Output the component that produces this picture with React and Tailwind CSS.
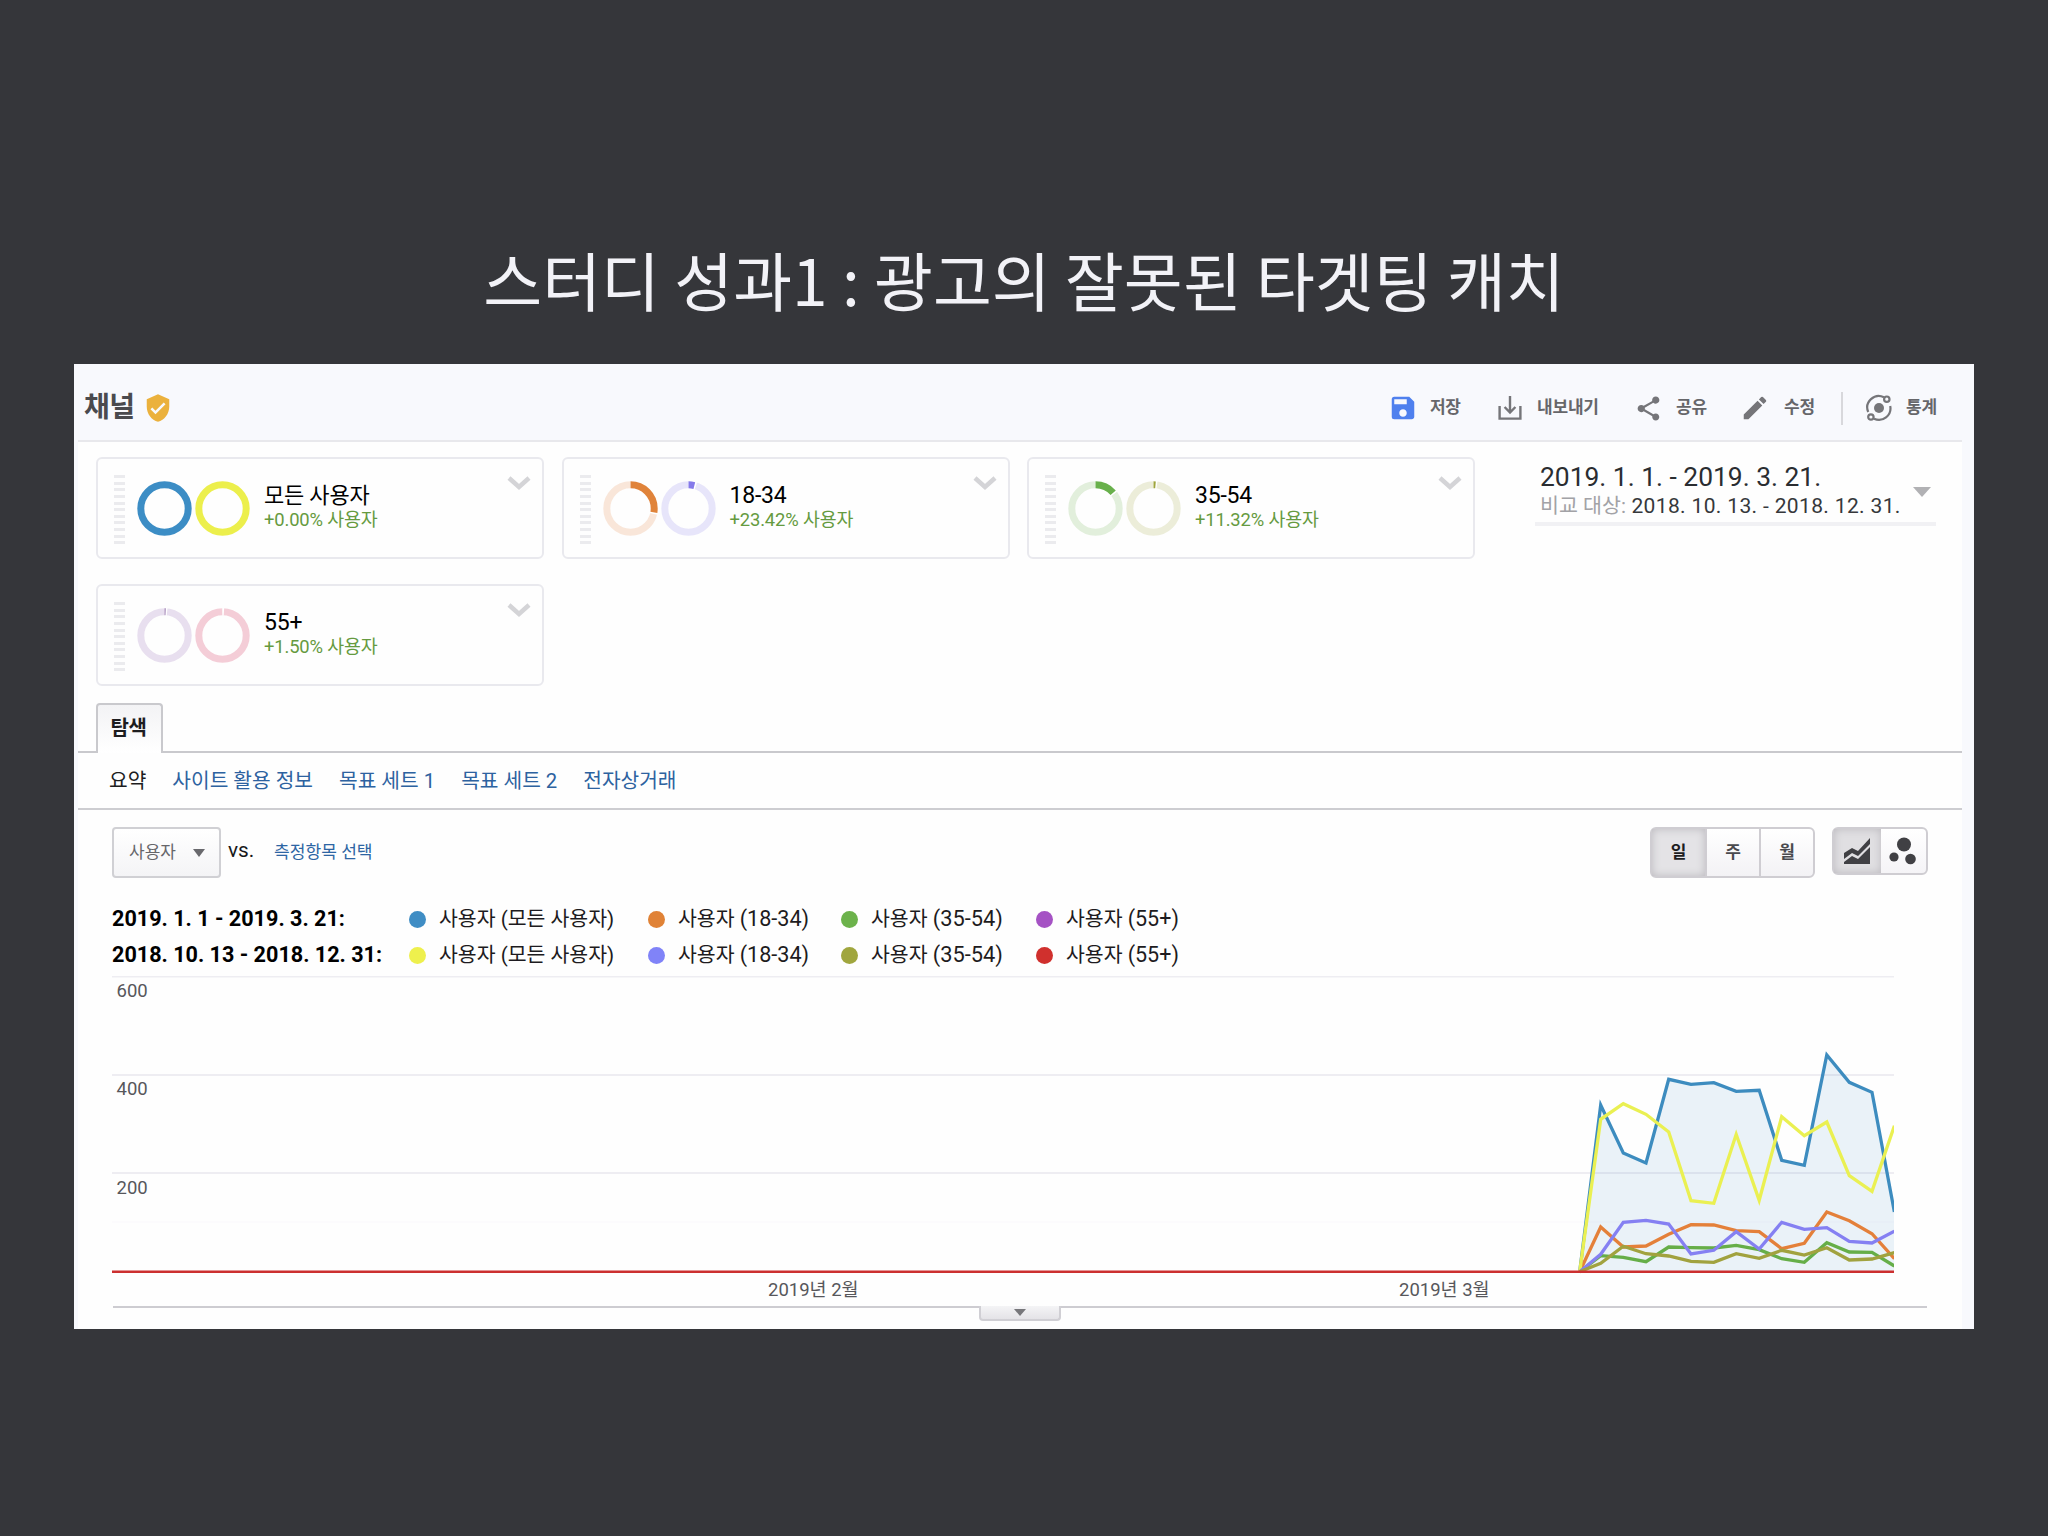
import { MdEdit, MdSave, MdShare, MdVerifiedUser } from 'react-icons/md'

const segments = [
  { name: '모든 사용자', nameStyle: 'text-[22px]', change: '+0.00%', rings: [{ color: '#3c8dc5', track: '#3c8dc5', share: 1 }, { color: '#ecef4c', track: '#ecef4c', share: 1 }] },
  { name: '18-34', nameStyle: 'text-[23px]', change: '+23.42%', rings: [{ color: '#e0833a', track: '#f9e6d9', share: 0.275 }, { color: '#8479ea', track: '#e7e5fa', share: 0.04 }] },
  { name: '35-54', nameStyle: 'text-[23px]', change: '+11.32%', rings: [{ color: '#68b04b', track: '#e2efdc', share: 0.133 }, { color: '#9fa53c', track: '#ecedd9', share: 0.014 }] },
  { name: '55+', nameStyle: 'text-[23px]', change: '+1.50%', rings: [{ color: '#a083b5', track: '#e8dfef', share: 0.008 }, { color: '#f4cdd7', track: '#f4cdd7', share: 0 }] },
]

const legend = [
  { range: '2019. 1. 1 - 2019. 3. 21:', colors: ['bg-[#3f8dc4]', 'bg-[#e08236]', 'bg-[#6cb24b]', 'bg-[#a552c4]'] },
  { range: '2018. 10. 13 - 2018. 12. 31:', colors: ['bg-[#eef04d]', 'bg-[#8083f8]', 'bg-[#a0a63e]', 'bg-[#d0302d]'] },
]
const legendItems = [
  { group: '(모든 사용자)', width: 'w-[239px]', size: 'text-[20.5px]' },
  { group: '(18-34)', width: 'w-[193px]', size: 'text-[21.6px]' },
  { group: '(35-54)', width: 'w-[195px]', size: 'text-[21.8px]' },
  { group: '(55+)', width: 'w-[150px]', size: 'text-[21.5px]' },
]

const subNav = ['사이트 활용 정보', '목표 세트 1', '목표 세트 2', '전자상거래']

const xs = [1467.7, 1488.7, 1511.3, 1534, 1556.7, 1579, 1601.8, 1624.2, 1647.2, 1669.7, 1692.3, 1714.8, 1737.3, 1760, 1782.4]
const series = [
  { color: '#3d8cbf', ys: [295.7, 129, 177, 187, 103.3, 108.3, 106.7, 115.3, 114.3, 184.3, 189.3, 79, 106.3, 116.3, 236] },
  { color: '#e4803a', ys: [295.7, 251, 271, 270, 258.3, 248.7, 249, 254.7, 255.7, 272.7, 267.3, 236, 244.7, 257.7, 282.7] },
  { color: '#66ae48', ys: [295.7, 279.7, 281.3, 285.7, 271, 271.7, 272, 269.3, 273.7, 282.7, 286.3, 266.7, 276, 276.3, 290] },
  { color: '#eaf052', ys: [295.7, 143.3, 127.7, 138.3, 156, 224.7, 227.3, 158.3, 224.3, 140.7, 159.7, 146, 199.7, 215.3, 149.7] },
  { color: '#8580f2', ys: [295.7, 278.3, 246.3, 244.3, 248, 278, 274.3, 255.7, 273, 246.3, 253.3, 251.7, 265.3, 267, 255.3] },
  { color: '#a1a23f', ys: [295.7, 287.3, 270.3, 277.7, 280, 285.3, 286.3, 277.7, 282.3, 274.3, 279, 271.7, 284, 283, 276.7] },
]

const toPoints = (ys) => ys.map((y, i) => `${xs[i]},${y}`).join(' ')

function Ring({ color, track, share }) {
  const r = 23.7
  const length = 2 * Math.PI * r
  return (
    <svg className="w-[55px] h-[55px]" viewBox="0 0 55 55" fill="none">
      <circle cx="27.5" cy="27.5" r={r} stroke={track} strokeWidth="7" />
      {share < 1 && (
        <g transform="rotate(-90 27.5 27.5)">
          <circle cx="27.5" cy="27.5" r={r} stroke="#fff" strokeWidth="8" strokeDasharray={`${length * share + 3} ${length}`} strokeDashoffset="1.5" />
          <circle cx="27.5" cy="27.5" r={r} stroke="#fff" strokeWidth="8" strokeDasharray={`1.5 ${length}`} strokeDashoffset={1.5 - length} />
          {share > 0 && <circle cx="27.5" cy="27.5" r={r} stroke={color} strokeWidth="7" strokeDasharray={`${length * share} ${length}`} />}
        </g>
      )}
    </svg>
  )
}

function SegmentCard({ name, nameStyle, change, rings }) {
  return (
    <div className="h-[102px] w-[448px] flex items-start rounded-md border-2 border-[#e9e9ee] pl-4 pr-[11px]">
      <div className="mt-4 flex flex-col gap-[3.65px]">
        {Array.from({ length: 11 }, (_, i) => (
          <div key={i} className="h-[3px] w-[11px] bg-[#ebebee]" />
        ))}
      </div>
      <div className="ml-3 mt-[22px] flex gap-[3px]">
        {rings.map((ring, i) => (
          <Ring key={i} {...ring} />
        ))}
      </div>
      <div className="ml-[14px] mt-[22px] flex-1">
        <div className={`h-[28px] leading-[29px] tracking-[-0.2px] text-black ${nameStyle}`}>{name}</div>
        <div className="h-[22px] text-[18.4px] leading-[22px] tracking-[-0.15px] text-[#659a40]">{change} 사용자</div>
      </div>
      <svg className="mt-[15px] h-[18px] w-[24px]" viewBox="0 0 24 18" fill="none" stroke="#d4d4d7" strokeWidth="4.5">
        <path d="M2 4L12 13L22 4" />
      </svg>
    </div>
  )
}

function ExportIcon() {
  return (
    <svg className="h-7 w-6" viewBox="0 0 24 28" fill="none" stroke="#757579" strokeWidth="2.4">
      <path d="M1.6 12V24.6H22.4V12M12 2V18M6.6 13L12 18.6L17.4 13" />
    </svg>
  )
}

function InsightsIcon() {
  return (
    <svg className="h-[30px] w-[26px]" viewBox="0 0 26 28" fill="none" stroke="#757579" strokeWidth="2.2">
      <circle cx="13" cy="14" r="5" fill="#757579" stroke="none" />
      <path d="M18 3.3A11.5 11.5 0 0 0 2.2 18M8 24.7A11.5 11.5 0 0 0 24.2 12" />
      <circle cx="20.8" cy="5.2" r="2.7" />
      <circle cx="4.9" cy="23" r="2.7" />
    </svg>
  )
}

function Toolbar() {
  return (
    <div className="flex h-[34px] items-center text-[17px] font-bold text-[#66666a]">
      <MdSave className="size-[30px] text-[#4f80ee]" />
      <span className="ml-[12px] w-[68px] tracking-[-0.4px]">저장</span>
      <ExportIcon />
      <span className="ml-[15px] w-[97px] tracking-[-0.2px]">내보내기</span>
      <MdShare className="size-[29px] text-[#757579]" />
      <span className="ml-[13px] w-[64px] tracking-[-0.2px]">공유</span>
      <MdEdit className="size-[30px] text-[#757579]" />
      <span className="ml-[14px] w-[57px] tracking-[-0.2px]">수정</span>
      <div className="h-[33px] w-[2px] bg-[#d8d8dc]" />
      <div className="ml-[23px]"><InsightsIcon /></div>
      <span className="ml-[14px] w-[33px] whitespace-nowrap tracking-[-0.2px]">통계</span>
    </div>
  )
}

function DateRange() {
  return (
    <div className="mt-[3px] flex h-[66px] w-[401px] items-start border-b-4 border-[#f1f1f4] pl-[5px] pr-[5px]">
      <div className="flex-1 whitespace-nowrap">
        <div className="h-[34px] text-[26.4px] leading-[35px] text-[#2a2d31]">2019. 1. 1. - 2019. 3. 21.</div>
        <div className="h-[26px] text-[20.6px] leading-[24px] text-[#36383b]">
          <span className="text-[#a2a2a6]">비교 대상:</span>
          <span className="text-[21px] tracking-[0.35px]"> 2018. 10. 13. - 2018. 12. 31.</span>
        </div>
      </div>
      <svg className="mt-[27px] h-[10px] w-[18px] shrink-0" viewBox="0 0 18 10" fill="#b1b1b4">
        <path d="M0 0H18L9 10Z" />
      </svg>
    </div>
  )
}

function ChartControls() {
  return (
    <div className="flex h-[51px] items-start pl-[34px] pr-[34px]">
      <div className="flex h-[51px] w-[109px] items-center justify-between rounded border-2 border-[#d0d0d4] bg-linear-to-b from-white to-[#f4f4f6] pl-[15px] pr-[14px] text-[17px] text-[#66666a]">
        <span>사용자</span>
        <svg className="h-[8px] w-[12px]" viewBox="0 0 12 8" fill="#69696d">
          <path d="M0 0H12L6 8Z" />
        </svg>
      </div>
      <span className="ml-[7px] w-[46px] text-[20.8px] leading-[47px] text-[#18181a]">vs.</span>
      <span className="text-[17.1px] leading-[50px] text-[#2d65a3]">측정항목 선택</span>
      <div className="ml-auto flex h-[51px] w-[165px] rounded-md border-2 border-[#cfcdd2] bg-linear-to-b from-white to-[#f3f2f5] text-[17px] font-bold text-[#4a4a4e]">
        <div className="flex w-[53px] items-center justify-center bg-[#e4e3e6] text-[#1d1d1f] shadow-[inset_0_0_9px_#bcbabf]">일</div>
        <div className="flex w-[54px] items-center justify-center border-l-2 border-[#cfcdd2]">주</div>
        <div className="flex flex-1 items-center justify-center border-l-2 border-[#cfcdd2]">월</div>
      </div>
      <div className="ml-[17px] flex h-[48px] w-[96px] rounded-md border-2 border-[#cfcdd2] bg-linear-to-b from-white to-[#f5f4f7]">
        <div className="flex w-[47px] items-center justify-center bg-[#e0dfe2] pr-[2px] shadow-[inset_0_0_9px_#bcbabf]">
          <svg className="h-[28px] w-[26px]" viewBox="0 0 26 28" fill="#404044">
            <path d="M0 16L8 11L14 14L26 1V7L14 19L8 16L0 22Z" />
            <path d="M0 27V25L8 19L14 22L26 10V27Z" />
          </svg>
        </div>
        <div className="flex flex-1 items-center justify-center pr-px">
          <svg className="h-[28px] w-[28px]" viewBox="0 0 28 28" fill="#404044">
            <circle cx="15" cy="7.5" r="7" />
            <circle cx="5" cy="20" r="4.6" />
            <circle cx="21.5" cy="22" r="5.3" />
          </svg>
        </div>
      </div>
    </div>
  )
}

function Legend() {
  return (
    <div className="pl-[34px] pt-[23px]">
      {legend.map((row) => (
        <div key={row.range} className="flex h-[36px] items-center whitespace-nowrap">
          <div className="w-[297px] text-[21.6px] font-bold text-black">{row.range}</div>
          {row.colors.map((color, i) => (
            <div key={color} className={`flex items-center ${legendItems[i].width}`}>
              <div className={`size-[17px] rounded-full ${color}`} />
              <span className="ml-[13px] text-[20.5px] leading-[36px] text-[#1d1b20]">
                사용자 <span className={legendItems[i].size}>{legendItems[i].group}</span>
              </span>
            </div>
          ))}
        </div>
      ))}
    </div>
  )
}

function Chart() {
  return (
    <svg className="ml-[34px] h-[330px] w-[1782px]" viewBox="0 0 1782 330" fill="none">
      <path d="M0 0.5H1782M0 99H1782M0 197H1782" stroke="#eeedf2" strokeWidth="2" />
      <path d="M0 246H1782" stroke="#fbfafc" strokeWidth="1.5" />
      <polygon points={`${toPoints(series[0].ys)} 1782.4,295.7`} fill="#3d8cc5" fillOpacity="0.1" />
      {series.map((s) => (
        <polyline key={s.color} points={toPoints(s.ys)} stroke={s.color} strokeWidth="3.3" />
      ))}
      <path d="M0 295.7H1782" stroke="#cc2f2f" strokeWidth="2.6" />
      <g fill="#57575b" fontSize="18.5">
        <text x="4.5" y="21">600</text>
        <text x="4.5" y="119">400</text>
        <text x="4.5" y="217.5">200</text>
        <text x="656" y="320">2019년 2월</text>
        <text x="1287" y="320">2019년 3월</text>
      </g>
    </svg>
  )
}

function App() {
  return (
    <div className="h-[1536px] w-[2048px] overflow-hidden bg-[#35363a] pt-[232px] font-[Roboto,'Noto_Sans_CJK_KR',sans-serif]">
      <h1 className="h-[132px] text-center font-['Noto_Sans_CJK_KR',sans-serif] text-[64px] leading-[92px] text-[#f2f2f7]">
        스터디 성과1 : 광고의 잘못된 타겟팅 캐치
      </h1>
      <main className="mx-auto flex h-[965px] w-[1900px] flex-col bg-[#f8f9fd] pl-1 pr-3">
        <header className="flex h-[76px] items-center justify-between pl-[6px] pr-[23px] pt-[12px]">
          <div className="flex items-center gap-[9px]">
            <h2 className="text-[28px] leading-[34px] tracking-[-0.6px] font-bold text-[#4a4a4e]">채널</h2>
            <MdVerifiedUser className="size-[30px] text-[#ebb13d]" />
          </div>
          <Toolbar />
        </header>
        <div className="flex-1 border-t-2 border-[#e8e8ec] bg-[#fefefe]">
          <div className="flex justify-between pl-[18px] pr-[26px] pt-[15px]">
            <div className="grid grid-cols-[448px_448px_448px] gap-x-[17.5px] gap-y-[25px]">
              {segments.map((segment) => (
                <SegmentCard key={segment.name} {...segment} />
              ))}
            </div>
            <DateRange />
          </div>

          <div className="mt-[17px] flex h-[50px] items-stretch">
            <div className="w-[18px] border-b-2 border-[#c9c9cd]" />
            <div className="flex w-[67px] items-center justify-center rounded-t border-2 border-b-0 border-[#c9c9cd] bg-linear-to-b from-[#f3f3f5] to-white pb-[2px] pr-[2px] text-[20px] font-bold tracking-[-0.4px] text-[#1d1d1f]">
              탐색
            </div>
            <div className="flex-1 border-b-2 border-[#c9c9cd]" />
          </div>
          <nav className="flex h-[57px] items-center gap-[26px] border-b-2 border-[#cdcdd1] pl-[31px] text-[20.3px] leading-[28px] text-[#2d62a0]">
            <span className="text-[#1d1d1f]">요약</span>
            {subNav.map((label) => (
              <span key={label}>{label}</span>
            ))}
          </nav>

          <div className="pt-[17px]">
            <ChartControls />
            <Legend />
            <div className="mt-[3px]">
              <Chart />
            </div>
          </div>
          <div className="mx-[35px] flex justify-center border-t-2 border-[#cdccd1]">
            <div className="-mt-[2px] flex h-[15px] w-[82px] justify-center rounded-b border-2 border-t-0 border-[#d0cfd4] bg-linear-to-b from-[#f4f4f6] to-[#e4e3e7] pt-[3px]">
              <svg className="h-[7px] w-[12px]" viewBox="0 0 12 7" fill="#77777b">
                <path d="M0 0H12L6 7Z" />
              </svg>
            </div>
          </div>
        </div>
      </main>
    </div>
  )
}

export default App
